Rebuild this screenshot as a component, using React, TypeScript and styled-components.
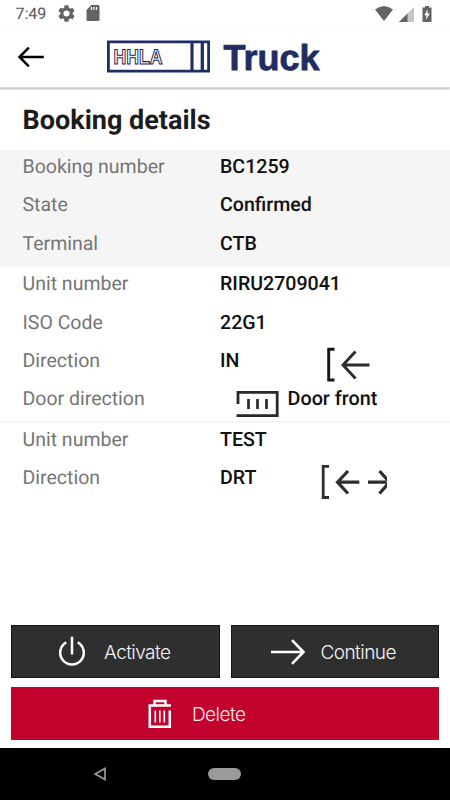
import React from 'react';
import styled, { createGlobalStyle } from 'styled-components';

const GlobalStyle = createGlobalStyle`
  * { box-sizing: border-box; }
  html, body { margin: 0; padding: 0; background: #fff; }
  body { font-family: Roboto, sans-serif; text-rendering: geometricPrecision; }
  svg { display: block; flex: none; }
`;

const Screen = styled.div`
  width: 450px;
  height: 800px;
  display: flex;
  flex-direction: column;
  overflow: hidden;
  background: #fff;
`;

const StatusBar = styled.header`
  height: 28px;
  flex: none;
  display: flex;
  align-items: center;
  padding: 0 16px 0 15.5px;
  color: #636363;
`;

const Clock = styled.span`
  width: 42px;
  font-size: 16px;
  line-height: 28px;
  color: #565656;
`;

const StatusIcons = styled.div<{ $end?: boolean }>`
  display: flex;
  align-items: center;
  margin-top: -2px;
  ${(p) => p.$end && 'margin-left: auto; margin-top: -1px;'}
`;

const AppBar = styled.div`
  height: 60px;
  flex: none;
  display: flex;
  align-items: flex-start;
  padding: 12px 0 0 17px;
  border-bottom: 1px solid #ddd;
  box-shadow: 0 1px 2px rgba(0, 0, 0, 0.3);
`;

const BackButton = styled.button`
  border: 0;
  background: none;
  padding: 6px 0 0;
  width: 90px;
`;

const Brand = styled.div`
  display: flex;
`;

const BrandName = styled.span`
  margin: -2px 0 0 12.5px;
  font: bold 36px/40px 'Liberation Sans', sans-serif;
  color: #1f2d62;
  -webkit-text-stroke: 0.8px #1f2d62;
`;

const Title = styled.h1`
  margin: 0;
  height: 62px;
  flex: none;
  padding: 16px 22.5px 0;
  font-size: 27px;
  line-height: 33px;
  font-weight: 700;
  color: #1c1c1c;
`;

const Section = styled.section<{ $shaded?: boolean; $divided?: boolean }>`
  flex: none;
  padding-bottom: ${(p) => (p.$shaded ? '2px' : '0')};
  background: ${(p) => (p.$shaded ? '#f5f5f5' : '#fff')};
  border-bottom: ${(p) => (p.$divided ? '2px solid #f5f5f5' : '0')};
`;

const Row = styled.div`
  height: 38.4px;
  display: grid;
  grid-template-columns: 197.5px 1fr;
  padding-left: 22.5px;
  line-height: 33px;
`;

const Label = styled.span`
  font-size: 19.5px;
  color: #757575;
`;

const Value = styled.span`
  font-size: 19.6px;
  font-weight: 500;
  color: #111;
`;

const IconValue = styled(Value)`
  display: flex;
  align-items: flex-start;
`;

const IconLead = styled.span<{ $width: number }>`
  width: ${(p) => p.$width}px;
`;

const IconSlot = styled.span<{ $top: number }>`
  display: block;
  margin-top: ${(p) => p.$top}px;
`;

const DoorText = styled.span`
  margin-left: 7.5px;
  font-size: 19.8px;
`;

const Actions = styled.div`
  margin-top: auto;
  flex: none;
  display: grid;
  grid-template-columns: 208.5px 208.5px;
  column-gap: 11px;
  row-gap: 9px;
  padding: 0 11px 8px;
`;

const ActionButton = styled.button<{ $danger?: boolean }>`
  height: 53px;
  padding: 0;
  display: flex;
  align-items: center;
  justify-content: flex-start;
  border: 1px solid ${(p) => (p.$danger ? '#c1032d' : '#151515')};
  background: ${(p) => (p.$danger ? '#c1032d' : '#2f2f2f')};
  grid-column: ${(p) => (p.$danger ? '1 / -1' : 'auto')};
  color: ${(p) => (p.$danger ? '#ffe6e4' : '#f5f5f5')};
`;

const ActionText = styled.span<{ $gap: number }>`
  margin: 2px 0 0 ${(p) => p.$gap}px;
  font: 300 19px/24px Inter, sans-serif;
  letter-spacing: -0.55px;
`;

const ActionIcon = styled.span<{ $left: number }>`
  margin-left: ${(p) => p.$left}px;
`;

const NavBar = styled.nav`
  height: 52px;
  flex: none;
  display: flex;
  align-items: center;
  padding-left: 93px;
  background: #000;
`;

const HomePill = styled.span`
  width: 33px;
  height: 12px;
  margin-left: 101px;
  border-radius: 6px;
  background: #9a9a9a;
`;

const GearIcon = () => (
  <svg width="17" height="17" viewBox="2 2 20 20" fill="currentColor">
    <path d="M19.14 12.94c.04-.3.06-.61.06-.94s-.02-.64-.07-.94l2.03-1.58a.5.5 0 0 0 .12-.61l-1.92-3.32a.49.49 0 0 0-.59-.22l-2.39.96a7 7 0 0 0-1.62-.94L14.4 2.81a.48.48 0 0 0-.48-.41h-3.84a.48.48 0 0 0-.47.41l-.36 2.54a7 7 0 0 0-1.62.94l-2.39-.96a.48.48 0 0 0-.59.22L2.74 8.87a.48.48 0 0 0 .12.61l2.03 1.58a6 6 0 0 0 0 1.88l-2.03 1.58a.5.5 0 0 0-.12.61l1.92 3.32c.12.22.37.29.59.22l2.39-.96c.5.38 1.03.7 1.62.94l.36 2.54c.05.24.24.41.48.41h3.84c.24 0 .44-.17.47-.41l.36-2.54a7 7 0 0 0 1.62-.94l2.39.96c.22.08.47 0 .59-.22l1.92-3.32a.48.48 0 0 0-.12-.61ZM12 15.6a3.6 3.6 0 1 1 0-7.2 3.6 3.6 0 0 1 0 7.2Z" />
  </svg>
);

const CardIcon = () => (
  <svg width="25" height="17" viewBox="0 0 25 17">
    <path d="M16.500 0H23a1.500 1.500 0 0 1 1.500 1.500v13A1.500 1.500 0 0 1 23 16H13a1.500 1.500 0 0 1-1.500-1.500V5Z" fill="currentColor" />
    <path d="M16.500 2v3M19 2v3M21.500 2v3" stroke="#fff" strokeWidth="1.200" />
  </svg>
);

const SignalIcons = () => (
  <svg width="60" height="18" viewBox="0 0 60 18">
    <path d="M1 4.500Q10-2.500 19 4.500L10 16Z" fill="currentColor" />
    <path d="M25 17L40 2V17Z" fill="#c6c6c6" />
    <path d="M25 17L33.500 8.500V17Z" fill="currentColor" />
    <path d="M49 2.500H51V1H55V2.500H57.500V17H48.500V2.500Z" fill="currentColor" />
    <path d="M54 4L50.300 10.200H52.600L52 14.800L55.800 8.600H53.400Z" fill="#fff" />
  </svg>
);

const BackArrow = () => (
  <svg width="28" height="22" viewBox="0 0 28 22" fill="none" stroke="#000" strokeWidth="2.500">
    <path d="M26.800 11H2.500M11.800 1.700L2.500 11L11.800 20.300" />
  </svg>
);

const LogoText = styled.text`
  font: bold 21px 'Liberation Sans', sans-serif;
`;

const BrandMark = () => (
  <svg width="104" height="33" viewBox="0 0 104 33" fill="none" stroke="#202e65">
    <path d="M1.400 1.900H101.600V31.100H1.400Z" strokeWidth="2.800" />
    <path d="M85 1V32" strokeWidth="3.100" />
    <path d="M95.300 1V32" strokeWidth="3.300" />
    <LogoText x="6.500" y="24" textLength="49" lengthAdjust="spacingAndGlyphs" stroke="#15235c" strokeWidth="1.100">HHLA</LogoText>
  </svg>
);

const InIcon = () => (
  <svg width="44" height="36" viewBox="0 0 44 36" fill="none" stroke="#2e2e2e" strokeWidth="2.900">
    <path d="M7.500 2.300H1.700V33H7.500" stroke="#151515" />
    <path d="M42.500 18H16M28.500 4.500L16 18L28.500 31.500" />
  </svg>
);

const DoorIcon = () => (
  <svg width="44" height="28" viewBox="0 0 44 28" fill="none" stroke="#2a2a2a">
    <path d="M2 14V2.300H41.200V25.700H.5" strokeWidth="2.800" />
    <path d="M12.500 9V19M21.500 9V19M30.500 9V19" strokeWidth="2.700" />
  </svg>
);

const DirectIcon = () => (
  <svg width="67" height="36" viewBox="0 0 67 36" fill="none" stroke="#2e2e2e" strokeWidth="3.200">
    <path d="M9 2.300H3.200V33.500H9" strokeWidth="2.800" />
    <path d="M39.300 18.200H18M28 7L17.500 18.200L28 29.500M48 18.200H66.500M59.500 7L69.500 18.200L59.500 29.500" />
  </svg>
);

const PowerIcon = () => (
  <svg width="28" height="31" viewBox="0 0 28 31" fill="none" stroke="#fff" strokeWidth="2.500">
    <path d="M8.300 6.400A11.800 11.800 0 1 0 19.700 6.400M14 .8V18.500" />
  </svg>
);

const ForwardIcon = () => (
  <svg width="36" height="28" viewBox="0 0 36 28" fill="none" stroke="#fff" strokeWidth="2.600">
    <path d="M0 14H32.500M21 2.200L32.500 14L21 25.800" />
  </svg>
);

const TrashIcon = () => (
  <svg width="24" height="30" viewBox="0 0 24 30" fill="none" stroke="#fff">
    <path d="M.5 6.500H23M1.800 6V27.800H21.800V11.500M6.500 6V2H17.500V6" strokeWidth="2.500" />
    <path d="M7.300 11.500V23.500M11.800 11.500V23.500M16.300 11.500V23.500" strokeWidth="1.600" />
  </svg>
);

const NavBack = () => (
  <svg width="14" height="15" viewBox="0 0 14 15" fill="none" stroke="#9a9a9a" strokeWidth="1.700">
    <path d="M12 1.500V12.500L2.200 7Z" />
  </svg>
);

const Field = ({ label, value }: { label: string; value: string }) => (
  <Row>
    <Label>{label}</Label>
    <Value>{value}</Value>
  </Row>
);

export default function App() {
  return (
    <>
      <GlobalStyle />
      <Screen>
        <StatusBar>
          <Clock>7:49</Clock>
          <StatusIcons>
            <GearIcon />
            <CardIcon />
          </StatusIcons>
          <StatusIcons $end>
            <SignalIcons />
          </StatusIcons>
        </StatusBar>
        <AppBar>
          <BackButton aria-label="Back">
            <BackArrow />
          </BackButton>
          <Brand>
            <BrandMark />
            <BrandName>Truck</BrandName>
          </Brand>
        </AppBar>
        <Title>Booking details</Title>
        <Section $shaded>
          <Field label="Booking number" value="BC1259" />
          <Field label="State" value="Confirmed" />
          <Field label="Terminal" value="CTB" />
        </Section>
        <Section $divided>
          <Field label="Unit number" value="RIRU2709041" />
          <Field label="ISO Code" value="22G1" />
          <Row>
            <Label>Direction</Label>
            <IconValue>
              <IconLead $width={106.5}>IN</IconLead>
              <IconSlot $top={3}>
                <InIcon />
              </IconSlot>
            </IconValue>
          </Row>
          <Row>
            <Label>Door direction</Label>
            <IconValue>
              <IconLead $width={16} />
              <IconSlot $top={8}>
                <DoorIcon />
              </IconSlot>
              <DoorText>Door front</DoorText>
            </IconValue>
          </Row>
        </Section>
        <Section>
          <Field label="Unit number" value="TEST" />
          <Row>
            <Label>Direction</Label>
            <IconValue>
              <IconLead $width={100}>DRT</IconLead>
              <IconSlot $top={3}>
                <DirectIcon />
              </IconSlot>
            </IconValue>
          </Row>
        </Section>
        <Actions>
          <ActionButton>
            <ActionIcon $left={46}>
              <PowerIcon />
            </ActionIcon>
            <ActionText $gap={18}>Activate</ActionText>
          </ActionButton>
          <ActionButton>
            <ActionIcon $left={39}>
              <ForwardIcon />
            </ActionIcon>
            <ActionText $gap={14}>Continue</ActionText>
          </ActionButton>
          <ActionButton $danger>
            <ActionIcon $left={136}>
              <TrashIcon />
            </ActionIcon>
            <ActionText $gap={20}>Delete</ActionText>
          </ActionButton>
        </Actions>
        <NavBar>
          <NavBack />
          <HomePill />
        </NavBar>
      </Screen>
    </>
  );
}
